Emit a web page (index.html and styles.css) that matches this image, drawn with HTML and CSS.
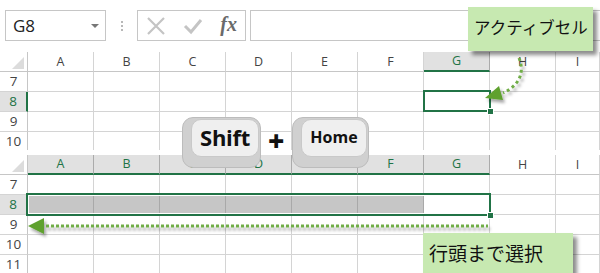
FILE: index.html
```html
<!DOCTYPE html>
<html lang="ja">
<head>
    <meta charset="UTF-8">
    <title>Shift + Home</title>
    <link rel="stylesheet" href="styles.css">
</head>
<body>

<div class="sheet">
    <div class="toolbar">
        <div class="namebox">
            <span>G8</span>
            <span class="caret"></span>
        </div>
        <div class="grip"><i></i><i></i><i></i></div>
        <div class="fxbtns">
            <svg class="ico" width="20" height="18" viewBox="0 0 20 18">
                <path d="M2 1 L18 17 M18 1 L2 17" stroke="#c4c4c4" stroke-width="2.2" fill="none"/>
            </svg>
            <svg class="ico" width="20" height="18" viewBox="0 0 20 18">
                <path d="M2 9 L8 15 L18 3" stroke="#c4c4c4" stroke-width="3" fill="none"/>
            </svg>
            <span class="fx">fx</span>
        </div>
        <div class="formula"></div>
    </div>

    <!-- first sheet: active cell G8 -->
    <div class="grid grid-top">
        <div class="row head">
            <div class="corner"></div>
            <div class="col">A</div>
            <div class="col">B</div>
            <div class="col">C</div>
            <div class="col">D</div>
            <div class="col">E</div>
            <div class="col">F</div>
            <div class="col on">G</div>
            <div class="col">H</div>
            <div class="col">I</div>
        </div>
        <div class="row">
            <div class="num">7</div>
            <div class="cell"></div><div class="cell"></div><div class="cell"></div><div class="cell"></div>
            <div class="cell"></div><div class="cell"></div><div class="cell"></div><div class="cell"></div><div class="cell"></div>
        </div>
        <div class="row">
            <div class="num on">8</div>
            <div class="cell"></div><div class="cell"></div><div class="cell"></div><div class="cell"></div>
            <div class="cell"></div><div class="cell"></div><div class="cell"></div><div class="cell"></div><div class="cell"></div>
        </div>
        <div class="row">
            <div class="num">9</div>
            <div class="cell"></div><div class="cell"></div><div class="cell"></div><div class="cell"></div>
            <div class="cell"></div><div class="cell"></div><div class="cell"></div><div class="cell"></div><div class="cell"></div>
        </div>
        <div class="row">
            <div class="num">10</div>
            <div class="cell"></div><div class="cell"></div><div class="cell"></div><div class="cell"></div>
            <div class="cell"></div><div class="cell"></div><div class="cell"></div><div class="cell"></div><div class="cell"></div>
        </div>
    </div>

    <!-- second sheet: A8:G8 selected -->
    <div class="grid grid-bottom">
        <div class="row head">
            <div class="corner"></div>
            <div class="col on">A</div>
            <div class="col on">B</div>
            <div class="col on">C</div>
            <div class="col on">D</div>
            <div class="col on">E</div>
            <div class="col on">F</div>
            <div class="col on">G</div>
            <div class="col">H</div>
            <div class="col">I</div>
        </div>
        <div class="row">
            <div class="num">7</div>
            <div class="cell"></div><div class="cell"></div><div class="cell"></div><div class="cell"></div>
            <div class="cell"></div><div class="cell"></div><div class="cell"></div><div class="cell"></div><div class="cell"></div>
        </div>
        <div class="row">
            <div class="num on">8</div>
            <div class="cell sel"></div><div class="cell sel"></div><div class="cell sel"></div><div class="cell sel"></div>
            <div class="cell sel"></div><div class="cell sel"></div><div class="cell"></div><div class="cell"></div><div class="cell"></div>
        </div>
        <div class="row">
            <div class="num">9</div>
            <div class="cell"></div><div class="cell"></div><div class="cell"></div><div class="cell"></div>
            <div class="cell"></div><div class="cell"></div><div class="cell"></div><div class="cell"></div><div class="cell"></div>
        </div>
        <div class="row">
            <div class="num">10</div>
            <div class="cell"></div><div class="cell"></div><div class="cell"></div><div class="cell"></div>
            <div class="cell"></div><div class="cell"></div><div class="cell"></div><div class="cell"></div><div class="cell"></div>
        </div>
        <div class="row">
            <div class="num">11</div>
            <div class="cell"></div><div class="cell"></div><div class="cell"></div><div class="cell"></div>
            <div class="cell"></div><div class="cell"></div><div class="cell"></div><div class="cell"></div><div class="cell"></div>
        </div>
    </div>

    <!-- overlays -->
    <div class="active-cell"><span class="handle"></span></div>
    <div class="row-select"><span class="handle"></span></div>

    <div class="key key-shift"><div class="face">Shift</div></div>
    <div class="plus">+</div>
    <div class="key key-home"><div class="face">Home</div></div>

    <svg class="arrows" width="600" height="273" viewBox="0 0 600 273">
        <defs>
            <filter id="shadow" x="-20%" y="-20%" width="140%" height="160%">
                <feDropShadow dx="2" dy="3" stdDeviation="1.6" flood-color="#000" flood-opacity="0.35"/>
            </filter>
        </defs>
        <g filter="url(#shadow)">
            <path d="M519 58 C524 70 522 84 503 93" stroke="#70ad47" stroke-width="3" stroke-dasharray="3 3" fill="none"/>
            <polygon points="485,98 499,86 503,100" fill="#5ea12e"/>
        </g>
        <g filter="url(#shadow)">
            <line x1="46" y1="226" x2="488" y2="226" stroke="#70ad47" stroke-width="3" stroke-dasharray="3 2"/>
            <polygon points="28,226 44,218 44,234" fill="#5ea12e"/>
        </g>
    </svg>

    <div class="callout callout-active">アクティブセル</div>
    <div class="callout callout-row">行頭まで選択</div>
</div>

</body>
</html>
```

FILE: styles.css
```css
* {
    box-sizing: border-box;
    margin: 0;
    padding: 0;
}
body {
    font-family: 'Open Sans', 'Noto Sans', sans-serif;
    background-color: white;
    width: 600px;
    height: 273px;
    overflow: hidden;
}
.sheet {
    position: relative;
    width: 600px;
    height: 273px;
    overflow: hidden;
}

/* formula bar */
.toolbar {
    display: flex;
    align-items: center;
    height: 41px;
    padding-top: 10px;
    padding-left: 5px;
    margin-bottom: 11px;
}
.namebox {
    display: flex;
    align-items: center;
    justify-content: space-between;
    width: 101px;
    height: 31px;
    border: 1px solid #c6c6c6;
    padding: 0 6px 0 7px;
    font-size: 17px;
    color: #222;
}
.caret {
    width: 0;
    height: 0;
    border-left: 4px solid transparent;
    border-right: 4px solid transparent;
    border-top: 4px solid #777;
}
.grip {
    display: flex;
    flex-direction: column;
    gap: 2px;
    width: 31px;
    align-items: center;
}
.grip i {
    display: block;
    width: 2px;
    height: 2px;
    background-color: #b8b8b8;
}
.fxbtns {
    display: flex;
    align-items: center;
    justify-content: space-between;
    width: 109px;
    height: 31px;
    border: 1px solid #c6c6c6;
    padding: 0 8px 0 8px;
}
.fx {
    font-family: 'Liberation Serif', 'DejaVu Serif', serif;
    font-style: italic;
    font-weight: bold;
    font-size: 20px;
    color: #6a6a6a;
    padding-bottom: 3px;
}
.formula {
    flex: 1;
    height: 31px;
    margin-left: 4px;
    border: 1px solid #c6c6c6;
    border-right: none;
}

/* grids */
.grid-top {
    height: 98px;
    overflow: hidden;
    margin-bottom: 5px;
}
.row {
    display: grid;
    grid-template-columns: 28px repeat(8, 66px) 44px;
    height: 20px;
}
.corner, .col, .num, .cell {
    border-right: 1px solid #d4d4d4;
    border-bottom: 1px solid #d4d4d4;
}
.corner {
    position: relative;
    border-right-color: #c6c6c6;
    border-bottom-color: #c6c6c6;
}
.corner::after {
    content: "";
    position: absolute;
    right: 3px;
    bottom: 2px;
    width: 0;
    height: 0;
    border-left: 12px solid transparent;
    border-bottom: 12px solid #dcdcdc;
}
.col {
    font-size: 12.5px;
    color: #444;
    text-align: center;
    line-height: 19px;
    border-bottom-color: #c6c6c6;
}
.col.on {
    background-color: #e1e1e1;
    color: #217346;
    border-right-color: #ababab;
    border-bottom: 2px solid #217346;
    line-height: 18px;
}
.num {
    font-size: 13.5px;
    color: #444;
    text-align: center;
    line-height: 19px;
    border-right-color: #c6c6c6;
}
.num.on {
    background-color: #e1e1e1;
    color: #217346;
    border-right: 2px solid #217346;
}
.cell.sel {
    background-color: #c6c6c6;
    border-right-color: #a9a9a9;
}

/* selections */
.active-cell, .row-select {
    position: absolute;
    border: 2px solid #217346;
}
.active-cell {
    left: 423px;
    top: 90px;
    width: 68px;
    height: 22px;
}
.row-select {
    left: 26px;
    top: 193px;
    width: 465px;
    height: 23px;
    box-shadow: inset 0 0 0 1px white;
}
.handle {
    position: absolute;
    right: -5px;
    bottom: -5px;
    width: 7px;
    height: 7px;
    background-color: #217346;
    border: 1px solid white;
}

/* keys */
.key {
    position: absolute;
    top: 117px;
    height: 51px;
    background-color: #d0d0d0;
    border: 1px solid #bcbcbc;
    border-radius: 11px;
}
.key-shift {
    left: 182px;
    width: 79px;
}
.key-home {
    left: 292px;
    width: 77px;
}
.face {
    position: absolute;
    top: 1px;
    right: 1px;
    left: 8px;
    height: 38px;
    background-color: #efefef;
    border: 1px solid #c9c9c9;
    border-radius: 10px;
    font-family: 'Open Sans', 'Noto Sans', sans-serif;
    font-weight: bold;
    color: #111;
    text-align: center;
}
.key-shift .face {
    font-size: 22px;
    line-height: 34px;
    letter-spacing: -0.3px;
}
.key-home .face {
    font-size: 16px;
    line-height: 35px;
}
.plus {
    position: absolute;
    left: 268px;
    top: 121px;
    font-family: 'Open Sans', sans-serif;
    font-weight: 800;
    font-size: 28px;
    color: #111;
}

/* arrows */
.arrows {
    position: absolute;
    left: 0;
    top: 0;
}

/* callouts */
.callout {
    position: absolute;
    background-color: #c7e9b1;
    box-shadow: 4px 4px 4px rgba(0, 0, 0, 0.45);
    font-family: 'Noto Sans CJK JP', sans-serif;
    color: #111;
}
.callout-active {
    left: 468px;
    top: 7px;
    width: 125px;
    height: 44px;
    font-size: 16.5px;
    line-height: 41px;
    padding-left: 6px;
}
.callout-row {
    left: 423px;
    top: 233px;
    width: 150px;
    height: 46px;
    font-size: 19px;
    line-height: 40px;
    padding-left: 6px;
}
```
